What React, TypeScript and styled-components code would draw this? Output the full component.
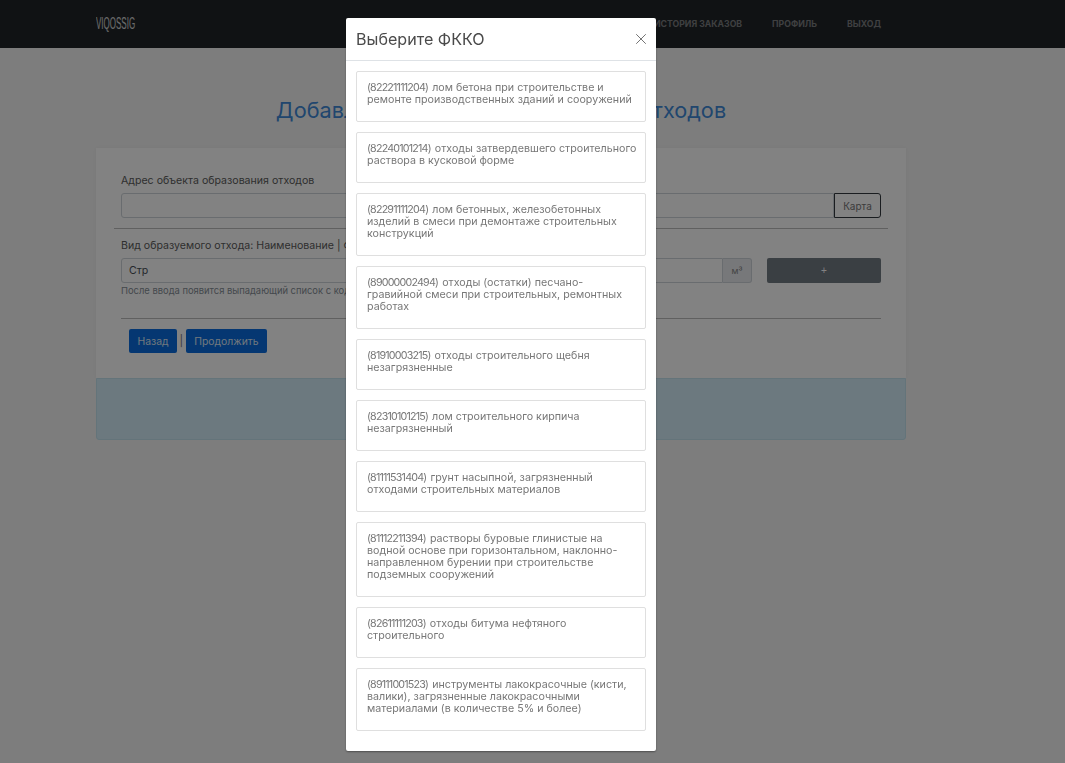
import React from "react";
import styled, { createGlobalStyle } from "styled-components";
import { X } from "lucide-react";

const GlobalStyle = createGlobalStyle`
	* { box-sizing: border-box; }
	html, body { margin: 0; height: 100%; overflow: hidden; }
	body {
		background: #f6f6f6;
		font-family: Inter, "Open Sans", "Liberation Sans", sans-serif;
		color: #212529;
	}
`;

const Navbar = styled.header`
	height: 48px;
	background: #212529;
	padding: 0 184px 0 96px;
	display: flex;
	align-items: center;
	justify-content: space-between;
`;

const Logo = styled.div`
	width: 38px;
	font-family: "Liberation Sans", sans-serif;
	font-size: 16px;
	line-height: 18px;
	color: #fff;
	opacity: .8;
	white-space: nowrap;
	transform: scaleX(.5);
	transform-origin: left center;
`;

const NavLinks = styled.nav`
	display: flex;
	gap: 30px;
`;

const NavLink = styled.a`
	font-size: 8.7px;
	font-weight: 700;
	color: #7c7e80;
`;

const Main = styled.main`
	width: 810px;
	margin-left: 96px;
`;

const Title = styled.h1`
	margin: 0;
	padding-top: 49px;
	height: 100px;
	font-size: 21.7px;
	line-height: 26px;
	font-weight: 400;
	text-align: center;
	color: #3f8ad8;
`;

const Card = styled.section`
	height: 230px;
	background: #fff;
	padding: 25px 25px 0;
	box-shadow: 0 0 5px rgba(0, 0, 0, .05);
`;

const FieldLabel = styled.label`
	display: block;
	font-size: 10.6px;
	line-height: 14px;
	margin-top: 1px;
	margin-bottom: 5px;
	color: #5c5c5c;
	white-space: nowrap;
`;

const FieldRow = styled.div`
	display: flex;
	height: 25px;
`;

const TextInput = styled.div`
	flex: 1;
	background: #fff;
	border: 1px solid #ced4da;
	border-radius: 3px 0 0 3px;
	padding: 0 7px;
	font-size: 10.6px;
	line-height: 23px;
	color: #495057;
`;

const MapButton = styled.button`
	width: 47px;
	border: 1px solid #343a40;
	border-radius: 0 3px 3px 0;
	background: transparent;
	font: inherit;
	font-size: 10px;
	color: #777;
	padding: 0;
`;

const Unit = styled.div`
	width: 29px;
	background: #e9ecef;
	border: 1px solid #ced4da;
	border-left: 0;
	border-radius: 0 3px 3px 0;
	font-size: 9px;
	line-height: 23px;
	text-align: center;
	color: #888;
`;

const AddButton = styled.button`
	width: 114px;
	margin-left: 15px;
	border: 0;
	border-radius: 2px;
	background: #737c84;
	color: #fff;
	font-size: 10px;
	padding: 0;
`;

const Divider = styled.hr<{ $wide?: boolean }>`
	border: 0;
	border-top: 1px solid #bcbcbc;
	margin: ${(p) => (p.$wide ? "10px -7px 10px" : "0")};
`;

const Hint = styled.small`
	display: block;
	height: 35px;
	padding-top: 2px;
	font-size: 9.4px;
	line-height: 12px;
	color: #868e96;
	white-space: nowrap;
`;

const Actions = styled.div`
	display: flex;
	align-items: center;
	gap: 2.5px;
	padding: 10px 0 0 8px;
	font-size: 11px;
	color: #777;
`;

const PrimaryButton = styled.button`
	height: 24px;
	padding: 0 8.5px;
	border: 0;
	border-radius: 2px;
	background: #0a6de0;
	color: #dfe9f5;
	font: inherit;
	font-size: 10.4px;
`;

const Alert = styled.div`
	height: 62px;
	background: #d4eefa;
	border: 1px solid #c4e3f0;
	border-radius: 0 0 3px 3px;
`;

const Backdrop = styled.div`
	position: fixed;
	inset: 0;
	background: rgba(0, 0, 0, .49);
	display: flex;
	align-items: flex-start;
	padding: 18px 0 0 346px;
`;

const Modal = styled.div`
	width: 310px;
	background: #fff;
	border-radius: 2px;
	box-shadow: 0 1px 2px rgba(0, 0, 0, .4);
`;

const ModalHeader = styled.div`
	height: 43px;
	padding: 0 6px 0 10px;
	border-bottom: 1px solid #dee2e6;
	display: flex;
	align-items: center;
	justify-content: space-between;
`;

const ModalTitle = styled.h5`
	margin: 0;
	font-size: 16.1px;
	font-weight: 400;
	color: #4a4a4a;
`;

const CloseButton = styled.button`
	display: flex;
	border: 0;
	padding: 0;
	background: none;
	color: #6f6f6f;
`;

const ModalBody = styled.div`
	padding: 10px 10px 20px;
	display: flex;
	flex-direction: column;
	gap: 10px;
`;

const Item = styled.div`
	border: 1px solid #dfdfdf;
	border-radius: 2px;
	padding: 10px 10px 15px;
	font-size: 10.7px;
	line-height: 12px;
	color: #777;
	white-space: pre;
`;

const Line = styled.div``;

// codes run narrower than the words around them
const Code = styled.span`
	letter-spacing: -.8px;
	padding-right: 1px;
`;

const items = [
	{ code: "(82221111204)", lines: [" лом бетона при строительстве и", "ремонте производственных зданий и сооружений"] },
	{ code: "(82240101214)", lines: [" отходы затвердевшего строительного", "раствора в кусковой форме"] },
	{ code: "(82291111204)", lines: [" лом бетонных, железобетонных", "изделий в смеси при демонтаже строительных", "конструкций"] },
	{ code: "(89000002494)", lines: [" отходы (остатки) песчано-", "гравийной смеси при строительных, ремонтных", "работах"] },
	{ code: "(81910003215)", lines: [" отходы строительного щебня", "незагрязненные"] },
	{ code: "(82310101215)", lines: [" лом строительного кирпича", "незагрязненный"] },
	{ code: "(81111531404)", lines: [" грунт насыпной, загрязненный", "отходами строительных материалов"] },
	{ code: "(81112211394)", lines: [" растворы буровые глинистые на", "водной основе при горизонтальном, наклонно-", "направленном бурении при строительстве", "подземных сооружений"] },
	{ code: "(82611111203)", lines: [" отходы битума нефтяного", "строительного"] },
	{ code: "(89111001523)", lines: [" инструменты лакокрасочные (кисти,", "валики), загрязненные лакокрасочными", "материалами (в количестве 5% и более)"] },
];

const App = (): JSX.Element => {
	return (
		<>
			<GlobalStyle />
			<Navbar>
				<Logo>VIQOSSIG</Logo>
				<NavLinks>
					<NavLink>ИСТОРИЯ ЗАКАЗОВ</NavLink>
					<NavLink>ПРОФИЛЬ</NavLink>
					<NavLink>ВЫХОД</NavLink>
				</NavLinks>
			</Navbar>
			<Main>
				<Title>Добавление адреса образования отходов</Title>
				<Card>
					<FieldLabel>Адрес объекта образования отходов</FieldLabel>
					<FieldRow>
						<TextInput />
						<MapButton>Карта</MapButton>
					</FieldRow>
					<Divider $wide />
					<FieldLabel>Вид образуемого отхода: Наименование | ФККО</FieldLabel>
					<FieldRow>
						<TextInput>Стр</TextInput>
						<Unit>м³</Unit>
						<AddButton>+</AddButton>
					</FieldRow>
					<Hint>После ввода появится выпадающий список с кодами</Hint>
					<Divider />
					<Actions>
						<PrimaryButton>Назад</PrimaryButton>
						|
						<PrimaryButton>Продолжить</PrimaryButton>
					</Actions>
				</Card>
				<Alert />
			</Main>
			<Backdrop>
				<Modal>
					<ModalHeader>
						<ModalTitle>Выберите ФККО</ModalTitle>
						<CloseButton>
							<X size={18} strokeWidth={1.3} />
						</CloseButton>
					</ModalHeader>
					<ModalBody>
						{items.map(({ code, lines }) => (
							<Item key={code}>
								{lines.map((line, i) => (
									<Line key={line}>
										{i === 0 && <Code>{code}</Code>}
										{line}
									</Line>
								))}
							</Item>
						))}
					</ModalBody>
				</Modal>
			</Backdrop>
		</>
	);
};

export default App;
